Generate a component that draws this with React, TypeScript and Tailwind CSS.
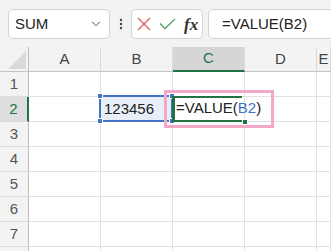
import { ChevronDown } from "lucide-react";

const cols = ["A", "B", "C", "D", "E"];
const rows = [1, 2, 3, 4, 5, 6, 7, 8];

const Handle = ({ className }: { className: string }) => (
  <div className={`absolute h-[6px] w-[6px] border border-white bg-[#4472c4] ${className}`} />
);

const App = () => {
  return (
    <div className="h-[251px] w-[331px] overflow-hidden bg-white font-['Liberation_Sans',Arial,sans-serif] text-[15px] text-[#222]">
      {/* formula bar */}
      <div className="flex h-[47px] items-start bg-[#f3f3f3] pl-[8px] pt-[9px]">
        <div className="flex h-[30px] w-[102px] shrink-0 items-center justify-between rounded-[5px] border border-[#d4d4d4] bg-white pl-[6px] pr-[6px]">
          <span>SUM</span>
          <ChevronDown size={14} strokeWidth={1.6} className="text-[#444]" />
        </div>
        <div className="flex h-[30px] w-[21px] shrink-0 items-center justify-center">
          <svg width="4" height="12" viewBox="0 0 4 12">
            <circle cx="2" cy="2" r="1.2" fill="#444" />
            <circle cx="2" cy="6" r="1.2" fill="#444" />
            <circle cx="2" cy="10" r="1.2" fill="#444" />
          </svg>
        </div>
        <div className="flex h-[30px] w-[72px] shrink-0 items-center gap-[8px] rounded-[5px] border border-[#d4d4d4] bg-white pl-[5px]">
          <svg width="14" height="14" viewBox="0 0 14 14">
            <path d="M1 1 L13 13 M13 1 L1 13" stroke="#e06060" strokeWidth="1.4" fill="none" />
          </svg>
          <svg width="17" height="12" viewBox="0 0 17 12">
            <path d="M1 5.5 L6 10.5 L16 1" stroke="#50a66c" strokeWidth="1.4" fill="none" />
          </svg>
          <span className="font-['Liberation_Serif',serif] text-[17px] font-bold italic leading-none text-[#333]">
            fx
          </span>
        </div>
        <div className="ml-[5px] flex h-[30px] w-[140px] shrink-0 items-center rounded-[5px] border border-[#d4d4d4] bg-white pl-[13px]">
          =VALUE(B2)
        </div>
      </div>

      {/* sheet */}
      <div className="relative">
        <div className="grid grid-cols-[29px_72px_72px_72px_72px_1fr] grid-rows-[25px_repeat(8,25px)]">
          <div className="flex items-end justify-end border-r border-b border-r-[#bdbdbd] border-b-[#c4c4c4] bg-[#f3f3f3] pb-[2px] pr-[2px]">
            <svg width="18" height="18" viewBox="0 0 18 18">
              <polygon points="0,18 18,18 18,0" fill="#dadada" />
            </svg>
          </div>
          {cols.map((c) => (
            <div
              key={c}
              className={`flex items-center justify-center border-r border-r-[#dadada] ${
                c === "C"
                  ? "border-b-2 border-b-[#217346] bg-[#d6d6d6] text-[#217346]"
                  : "border-b border-b-[#c4c4c4] bg-[#f3f3f3] text-[#444]"
              }`}
            >
              {c}
            </div>
          ))}
          {rows.map((r) => (
            <Row key={r} r={r} />
          ))}
        </div>

        {/* B2 reference outline */}
        <div className="absolute left-[99px] top-[48px] h-[27px] w-[74px] border-2 border-[#4472c4]" />
        <Handle className="left-[97px] top-[46px]" />
        <Handle className="left-[97px] top-[71px]" />
        <Handle className="left-[169px] top-[46px]" />
        <Handle className="left-[169px] top-[71px]" />

        {/* active cell C2 */}
        <div className="absolute left-[172px] top-[49px] h-[26px] w-[70px] border-y-2 border-l-[3px] border-[#217346]" />
        <div className="absolute left-[242px] top-[72px] h-[6px] w-[6px] border border-white bg-[#217346]" />
        <div className="absolute left-[176px] top-[49px] flex h-[25px] items-center whitespace-nowrap">
          =VALUE(<span className="text-[#4472c4]">B2</span>)
        </div>

        {/* highlight */}
        <div className="absolute left-[164px] top-[43px] h-[38px] w-[110px] border-[3px] border-[#f4a8c7]" />
      </div>
    </div>
  );
};

const Row = ({ r }: { r: number }) => {
  const sel = r === 2;
  return (
    <>
      <div
        className={`flex items-center justify-center border-b border-b-[#dadada] ${
          sel
            ? "border-r-2 border-r-[#217346] bg-[#dedede] text-[#217346]"
            : "border-r border-r-[#bdbdbd] bg-[#f3f3f3] text-[#555]"
        }`}
      >
        {r < 8 ? r : ""}
      </div>
      {cols.map((c) => (
        <div
          key={c}
          className={`flex items-center border-r border-b border-[#e1e1e1] pl-[3px] ${
            sel && c === "B" ? "bg-[#e8eef8]" : ""
          }`}
        >
          {sel && c === "B" ? "123456" : ""}
        </div>
      ))}
    </>
  );
};

export default App;
